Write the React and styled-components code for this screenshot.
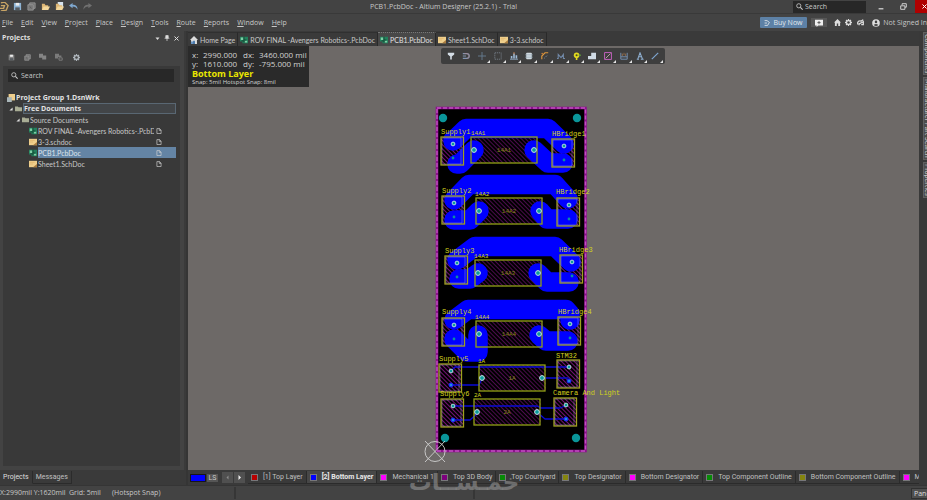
import React from "react";
import styled, { createGlobalStyle, css } from "styled-components";

const GlobalStyle = createGlobalStyle`
  *, *::before, *::after { box-sizing: border-box; }
  html, body { margin: 0; padding: 0; background: #3a3a3a; }
  body { overflow: hidden; }
  button, input { font: inherit; color: inherit; margin: 0; padding: 0; border: 0; background: none; }
  ul { list-style: none; margin: 0; padding: 0; }
  svg { display: block; flex: none; }
`;

const narrowText = css`
  font-family: Roboto, "Open Sans", sans-serif;
`;

const documentText = css`
  font-family: Lato, "Open Sans", sans-serif;
`;

const Window = styled.div`
  display: flex;
  flex-direction: column;
  height: 100vh;
  overflow: hidden;
  font-family: "Open Sans", "Noto Sans", sans-serif;
  font-size: 7px;
  line-height: 10px;
  color: #c8c8c8;
  background: #3a3a3a;
  white-space: nowrap;
`;

const TitleBar = styled.header`
  display: grid;
  grid-template-columns: 1fr auto 1fr;
  align-items: center;
  height: 14px;
  flex: none;
  background: #434343;
  border-bottom: 1px solid #393939;
`;

const QuickAccess = styled.div`
  display: flex;
  gap: 4px;
`;

const IconButton = styled.button`
  display: flex;
  align-items: center;
  justify-content: center;
  width: ${(p) => p.$w || 10}px;
  height: 10px;
`;

const DocTitle = styled.h1`
  margin: 0;
  padding-right: 40px;
  font-size: 7px;
  font-weight: 400;
`;

const WindowTools = styled.div`
  display: flex;
  justify-content: flex-end;
  align-items: center;
  height: 13px;
`;

const TitleSearch = styled.label`
  display: flex;
  align-items: center;
  gap: 2px;
  width: 73px;
  height: 12px;
  padding-left: 3px;
  margin-right: 8px;
  background: #272727;
  input { width: 50px; outline: none; }
  input::placeholder { color: #c8c8c8; opacity: 1; }
`;

const WindowButton = styled.button`
  display: flex;
  align-items: center;
  justify-content: ${(p) => (p.$close ? "flex-end" : "center")};
  width: ${(p) => (p.$close ? 12 : 14)}px;
  height: 13px;
  margin-left: ${(p) => (p.$gap || 0)}px;
  background: ${(p) => (p.$close ? "#b00000" : "transparent")};
`;

const MenuBar = styled.nav`
  display: flex;
  align-items: center;
  justify-content: space-between;
  height: 17px;
  flex: none;
  background: #434343;
`;

const MenuList = styled.div`
  display: flex;
  gap: 8px;
  padding-left: 2px;
`;

const MenuItem = styled.button`
  line-height: 10px;
  &::first-letter { text-decoration: underline; }
`;

const Account = styled.div`
  display: flex;
  align-items: center;
  width: 167px;
  gap: 1px;
`;

const BuyButton = styled.button`
  display: flex;
  align-items: center;
  justify-content: center;
  gap: 3px;
  width: 47px;
  height: 11px;
  flex: none;
  margin-right: 3px;
  border-radius: 1px;
  background: #5d81a6;
  color: #e4e8ec;
`;

const CommentButton = styled.button`
  display: flex;
  align-items: center;
  justify-content: center;
  width: 16px;
  height: 9px;
  flex: none;
  margin-right: 4px;
  background: #565656;
`;

const SignIn = styled.button`
  display: flex;
  align-items: center;
  gap: 3px;
  margin-left: 4px;
`;

const Workspace = styled.div`
  display: flex;
  flex: 1;
  min-height: 0;
`;

const SidePanel = styled.aside`
  display: flex;
  flex-direction: column;
  width: 188px;
  flex: none;
  border-right: 2px solid #353535;
  ${narrowText}
`;

const PanelFrame = styled.section`
  display: flex;
  flex-direction: column;
  flex: 1;
  min-height: 0;
  margin-right: 2px;
  padding: 0 4px 4px 3px;
  background: #434343;
`;

const PanelHeader = styled.div`
  display: flex;
  align-items: center;
  height: 14px;
  h2 {
    margin: 0 auto 0 -1px;
    font-family: "Open Sans", sans-serif;
    font-size: 7px;
    font-weight: 700;
    color: #dedede;
  }
`;

const PanelTools = styled.div`
  display: flex;
  align-items: center;
  gap: 6px;
  height: 18px;
  margin-top: 3px;
  padding: 0 3px;
`;

const PanelBody = styled.div`
  flex: 1;
  padding: 1px 4px 0 4px;
  background: #393939;
`;

const PanelSearch = styled.label`
  display: flex;
  align-items: center;
  gap: 3px;
  height: 13px;
  margin: 2px 2px 0 1px;
  padding-left: 3px;
  background: #282828;
  input { flex: 1; min-width: 0; outline: none; font-family: "Open Sans", sans-serif; }
  input::placeholder { color: #c8c8c8; opacity: 1; }
`;

const Tree = styled.ul`
  margin-top: 10px;
`;

const TreeRow = styled.li`
  display: flex;
  align-items: center;
  height: 11px;
  padding-left: ${(p) => p.$indent}px;
`;

const Caret = styled.span`
  width: 6px;
  svg { width: 4px; height: 4px; }
`;

const TreeLabel = styled.button`
  display: flex;
  align-items: center;
  flex: 1;
  min-width: 0;
  height: 11px;
  margin-left: 1px;
  padding: 0 14px 0 0;
  text-align: left;
  font-weight: ${(p) => (p.$bold ? 700 : 400)};
  color: ${(p) => (p.$bold ? "#e2e2e2" : "#c8c8c8")};
  ${(p) => (p.$bold ? css`font-family: "Open Sans", sans-serif;` : documentText)}
  ${(p) => p.$focus && css`border: 1px solid #596773; background: #424548;`}
  ${(p) => p.$selected && css`background: #6484a4; color: #dde5ec;`}
  span { flex: 1; overflow: hidden; }
  svg { margin-left: 2px; }
`;

const PanelTabs = styled.div`
  display: flex;
  align-items: center;
  height: 15px;
`;

const PanelTab = styled.button`
  height: 13px;
  padding: 0 3px;
  color: ${(p) => (p.$active ? "#dedede" : "#c0c0c0")};
  border-right: 1px solid #2b2b2b;
  border-bottom: 1px solid ${(p) => (p.$active ? "transparent" : "#2b2b2b")};
`;

const Editor = styled.main`
  display: flex;
  flex-direction: column;
  flex: 1;
  min-width: 0;
`;

const DocTabs = styled.div`
  display: flex;
  height: 15px;
  flex: none;
  padding-top: 1px;
  ${documentText}
`;

const DocTab = styled.button`
  display: flex;
  align-items: center;
  gap: 2px;
  padding: 0 2px;
  border-right: 1px solid #292929;
  border-top: 1px ${(p) => (p.$active ? "dotted #777" : "solid #303030")};
  background: ${(p) => (p.$active ? "#484848" : "#3a3a3a")};
  color: ${(p) => (p.$active ? "#e2e2e2" : "#c8c8c8")};
`;

const Canvas = styled.div`
  position: relative;
  flex: 1;
  min-height: 0;
  background: #6d6967;
`;

const HeadsUp = styled.div`
  position: absolute;
  top: 0;
  left: 0;
  width: 121px;
  height: 41px;
  padding: 4px 2px 0 4px;
  background: #2a2a2a;
  color: #d2d2d2;
  font-size: 8px;
  line-height: 9px;
`;

const Coordinates = styled.div`
  display: grid;
  grid-template-columns: 11px 40px 16px 1fr;
`;

const LayerName = styled.div`
  font-size: 9px;
  line-height: 11px;
  font-weight: 700;
  color: #eae600;
`;

const SnapInfo = styled.div`
  font-size: 6px;
  line-height: 6px;
`;

const ActiveBar = styled.div`
  position: absolute;
  top: 2px;
  left: 253px;
  display: flex;
  align-items: center;
  height: 16px;
  padding: 0 2px;
  border-radius: 2px;
  background: #3e3e3e;
`;

const ToolButton = styled.button`
  position: relative;
  display: flex;
  align-items: center;
  justify-content: center;
  width: ${(p) => (p.$wide ? 15 : 16)}px;
  height: 16px;
  &::after {
    content: "";
    display: ${(p) => (p.$menu ? "block" : "none")};
    position: absolute;
    right: 0;
    bottom: 1px;
    border-left: 3px solid transparent;
    border-bottom: 3px solid #e4e4e4;
  }
`;

const Board = styled.svg`
  margin: 52px 0 0 236px;
  width: 200px;
  height: 368px;
  text {
    font-family: "Liberation Mono", monospace;
    font-size: 7px;
    fill: #d2d21e;
  }
  .fuse { font-size: 6px; }
`;

const LayerBar = styled.div`
  display: flex;
  align-items: center;
  height: 15px;
  flex: none;
  padding-left: 2px;
  overflow: hidden;
  ${narrowText}
`;

const CurrentLayer = styled.button`
  width: 16px;
  height: 8px;
  flex: none;
  border: 1px solid #181818;
  background: #0000ff;
`;

const LayerSet = styled.button`
  width: 11px;
  height: 8px;
  flex: none;
  margin: 0 4px 0 1px;
  background: #565656;
  line-height: 8px;
`;

const Pager = styled.button`
  display: flex;
  align-items: center;
  justify-content: center;
  width: 11px;
  height: 11px;
  flex: none;
  margin-right: 1px;
  background: #505050;
`;

const LayerTabs = styled.div`
  display: flex;
  flex: 1;
  min-width: 0;
  margin-left: 2px;
  overflow: hidden;
`;

const LayerTab = styled.button`
  display: flex;
  align-items: center;
  flex: none;
  gap: 5px;
  height: 13px;
  padding: 0 3px;
  border-right: 1px solid #2b2b2b;
  border-bottom: 1px solid #2b2b2b;
  background: ${(p) => (p.$active ? "#474747" : "#3a3a3a")};
  color: ${(p) => (p.$active ? "#e8e8e8" : "#c0c0c0")};
  font-weight: ${(p) => (p.$active ? 700 : 400)};
`;

const Swatch = styled.span`
  width: 7px;
  height: 7px;
  flex: none;
  border: 1px solid #77777a;
  background: ${(p) => p.$color};
`;

const Dock = styled.div`
  display: flex;
  flex-direction: column;
  gap: 2px;
  width: 8px;
  flex: none;
  padding: 1px 0 0 4px;
  background: #393939;
  overflow: hidden;
  ${documentText}
`;

const DockTab = styled.button`
  flex: none;
  width: 10px;
  padding: 1px 0;
  border: 1px solid #606060;
  background: #4c4c4c;
  line-height: 8px;
  writing-mode: vertical-rl;
  text-align: left;
`;

const StatusBar = styled.footer`
  display: flex;
  align-items: center;
  height: 15px;
  flex: none;
  background: #434343;
  border-top: 1px solid #353535;
`;

const StatusText = styled.span`
  width: ${(p) => p.$w}px;
`;

const StatusDivider = styled.span`
  width: ${(p) => p.$w}px;
  height: 12px;
  border-left: 2px solid #363636;
`;

const PanelsButton = styled.button`
  width: 28px;
  height: 11px;
  margin: 0 -12px 0 auto;
  padding-left: 2px;
  text-align: left;
  border: 1px solid #303030;
  background: #4f4f4f;
  color: #dedede;
`;

const Watermark = styled.div`
  position: absolute;
  left: 404px;
  top: 466px;
  width: 120px;
  text-align: center;
  font-family: "DejaVu Sans", sans-serif;
  font-size: 23px;
  font-weight: 700;
  line-height: 32px;
  white-space: nowrap;
  color: rgba(165, 165, 165, 0.5);
  pointer-events: none;
`;

const Icon = ({ s = 9, children }) => (
  <svg width={s} height={s} viewBox="0 0 10 10" fill="none" aria-hidden="true">{children}</svg>
);

const SearchIcon = () => (
  <Icon s={7}><circle cx="4" cy="4" r="3" stroke="#ccc" strokeWidth="1.2" /><path d="M6.2 6.2L9.5 9.5" stroke="#ccc" strokeWidth="1.5" /></Icon>
);
const SaveIcon = ({ c = "#8fb4d4", s }) => (
  <Icon s={s}><path d="M1 1H9V9H1Z" fill={c} /><path d="M3 1H7V4H3Z" fill="#ececec" /><path d="M2.5 6H7.5V9H2.5Z" fill="#565b60" /></Icon>
);
const CopyIcon = ({ s }) => (
  <Icon s={s}><path d="M3 1H9V7H3Z" fill="#6c6c6c" stroke="#999" /><path d="M1 3H7V9H1Z" fill="#777" stroke="#939393" /><path d="M3 5L5 7" stroke="#555" /></Icon>
);
const OpenIcon = ({ doc }) => (
  <Icon>{doc && <path d="M3 0H9V6H3Z" fill="#d8e4ee" />}<path d="M1 2H4L5 3.5H8V9H1Z" fill="#ddb675" /><path d="M1 9L3 5H10L8 9Z" fill="#f3d79c" /></Icon>
);
const ArrowIcon = ({ redo }) => (
  <Icon><g transform={redo ? "translate(10 0) scale(-1 1)" : undefined}><path d="M0 4L4 1V3C8 3 9.5 5 9.5 8.5C8 6 7 5 4 5V7Z" fill={redo ? "#707070" : "#7fa8d0"} /></g></Icon>
);
const FolderIcon = () => (
  <Icon s={7}><path d="M0 2H4L5 3.3H10V9H0Z" fill="#a9ad95" /></Icon>
);
const BoardIcon = ({ s = 8 }) => (
  <Icon s={s}><path d="M0 1H10V9H3V7H0Z" fill="#22805c" /><path d="M1 2H4V5H1ZM6 6H9V8H6Z" fill="#7fcfa6" /><path d="M5 1V5H8M2 6H5V8" stroke="#11402e" /></Icon>
);
const SheetIcon = ({ s = 8 }) => (
  <Icon s={s}><path d="M0 1H10V9H0Z" fill="#efcf8c" /><path d="M10 5V9H5Z" fill="#a97b3e" /><path d="M1 3H7M1 5H5" stroke="#dcae62" strokeWidth=".7" /></Icon>
);
const PageIcon = () => (
  <Icon s={6}><path d="M1.5 1H6L8.5 3.5V9.2H1.5Z M5.5 1V4H8.5" stroke="#d3d3d3" strokeWidth="1.1" /></Icon>
);
const HomeIcon = ({ s = 8, c = "#ddd", blue }) => (
  <Icon s={s}><path d="M5 0L10 5H8.7V10H6V6.5H4V10H1.3V5H0Z" fill={c} />{blue && <path d="M4 6H6V10H4ZM1.5 7H3.5V10H1.5Z" fill="#4b83bd" />}</Icon>
);
const GearIcon = ({ s = 7, c = "#ddd", hole = "#434343" }) => (
  <Icon s={s}><circle cx="5" cy="5" r="3.6" fill={c} /><path d="M5 0V10M0 5H10M1.5 1.5L8.5 8.5M8.5 1.5L1.5 8.5" stroke={c} strokeWidth="1.8" /><circle cx="5" cy="5" r="1.8" fill={hole} /></Icon>
);

const TOOLS = [
  ["Filter", false, <path d="M1 1H9V3L6 5.5V9.5H4V5.5L1 3Z" fill="#d4dde5" />],
  ["Snap", false, <><path d="M1 2H6A3 3 0 0 1 6 8H1" stroke="#7f95b2" strokeWidth="1.6" /><path d="M3 2H6A3 3 0 0 1 6 8" stroke="#bb8585" strokeWidth=".7" /><path d="M1 5H5" stroke="#93aac5" /></>],
  ["Move", true, <path d="M5 0V10M0 5H10" stroke="#65798d" strokeWidth="1.2" />],
  ["Select", true, <path d="M1 1H9V9H1Z" stroke="#7d8994" strokeDasharray="1.5 1" />],
  ["Align", true, <><path d="M0 9H10" stroke="#9dbad6" /><path d="M1 5H3V8H1ZM4 2H6V8H4ZM7 4H9V8H7Z" fill="#9dbad6" /><path d="M5 0V3" stroke="#d98a51" /></>],
  ["Component", true, <><rect x="1.5" y="1" width="7" height="8" rx="1" fill="#d4dde4" /><path d="M0 3H10M0 5H10M0 7H10" stroke="#889baa" strokeWidth=".6" /></>],
  ["Route", true, <><path d="M1 9V5L5 1H9" stroke="#e0983c" strokeWidth="1.4" /><path d="M4 8L8 4" stroke="#8296aa" strokeDasharray="1.5 1" /><circle cx="1.5" cy="2" r="1" fill="#c7803b" /></>],
  ["Tune", true, <path d="M0 8H1.5V3L5 7L8 3V8H10" stroke="#7189a8" strokeWidth="1.3" />],
  ["Via", true, <><circle cx="4.5" cy="4" r="3.5" fill="#e2da20" /><circle cx="4.5" cy="4" r="1.3" fill="#4c4c20" /><path d="M4.5 7V10" stroke="#e2da20" strokeWidth="2" /><path d="M7 4H10" stroke="#5c9d36" strokeWidth="1.5" /></>],
  ["Polygon", true, <path d="M0 5H4V1H10V9H0Z" fill="#d0dbe5" />],
  ["Keepout", true, <><path d="M.7 .7H9.3V9.3H.7Z" stroke="#c260bd" strokeWidth="1.2" /><path d="M2 8L8 2" stroke="#d8b0c0" /></>],
  ["Dimension", true, <><path d="M1 1V9H9V1M1 6H9" stroke="#7790b1" strokeWidth="1.2" /><path d="M3 5V2M5 4V1M7 5V2" stroke="#b47e50" strokeWidth=".8" /></>],
  ["Text", true, <path d="M1 9H3.8M6 9H9.5M2.2 9L5 1L8.2 9M3.4 6H7" stroke="#8eafd0" strokeWidth="1.3" />],
  ["Line", true, <path d="M1 9L9 1" stroke="#7fa7d2" strokeWidth="1.4" />],
];

const MENUS = ["File", "Edit", "View", "Project", "Place", "Design", "Tools", "Route", "Reports", "Window", "Help"];

const LAYERS = [
  ["[1] Top Layer", "#b80000"], ["[2] Bottom Layer", "#0000ff"], ["Mechanical 1", "#ff00ff"],
  ["Top 3D Body", "#7d007d"], ["Top Courtyard", "#078a07"], ["Top Designator", "#85850f"],
  ["Bottom Designator", "#ff00ff"], ["Top Component Outline", "#078a07"],
  ["Bottom Component Outline", "#85850f"], ["Mechanical 13", "#ff00ff"],
];

const FILES = [
  ["ROV FINAL -Avengers Robotics-.PcbDoc", "pcb"], ["3-3.schdoc", "sch"],
  ["PCB1.PcbDoc", "pcb"], ["Sheet1.SchDoc", "sch"],
];

const CONNECTORS = [
  ["Supply1", 441, 137, 441, 134], ["HBridge1", 552, 139, 552, 136],
  ["Supply2", 442, 196, 442, 193], ["HBridge2", 557, 198, 556, 194],
  ["Supply3", 445, 256, 445, 253], ["HBridge3", 560, 255, 559, 252],
  ["Supply4", 442, 318, 442, 314], ["HBridge4", 558, 317, 558, 314],
  ["Supply5", 439, 364, 439, 361], ["STM32", 557, 360, 556, 358],
  ["Supply6", 441, 399, 440, 396], ["Camera And Light", 554, 398, 553, 395],
];

const FUSES = [
  ["14A1", 471, 137, 471], ["14A2", 476, 198, 475], ["14A3", 475, 260, 474],
  ["14A4", 476, 321, 475], ["1A", 479, 365, 478], ["2A", 474, 399, 474],
];

const POURS = [
  "M453 140V141L466 128.5H548L564 144", "M474 150L460 164H457", "M534 150L548 163H563",
  "M454 200L469 184.5H555L568 199", "M479 211L470 220H454", "M540 211L547 219H568",
  "M457 260L475 246.5H555L571 262", "M478 273L470 279H459", "M538 273L547 282H569",
  "M454 320L468 309.5H566L570 314V320", "M454 339L467 352H478V335", "M539 335L546 341H568",
];

const TRACKS = [
  "M451 371L455 367H568", "M451 385H479L482 379", "M543 378H568",
  "M452 406H537L541 408H560L565 406", "M452 420H470L478 413", "M538 413L545 419H565",
];

function BoardDrawing() {
  return (
    <Board viewBox="424 98 200 368" role="img" aria-label="PCB layout, bottom layer">
      <defs>
        <pattern id="hatch" width="3" height="3" patternUnits="userSpaceOnUse" patternTransform="rotate(-45)">
          <path d="M0 0V3" stroke="#8b168b" strokeWidth="1.7" />
        </pattern>
      </defs>
      <rect x="437" y="108" width="148.5" height="343" fill="#000" stroke="#8c128c" strokeWidth="2.6" />
      <rect x="437" y="108" width="148.5" height="343" fill="none" stroke="#c04fc0" strokeWidth="1.4" strokeDasharray="4 2" />
      {FUSES.map(([n, x, y]) => <rect key={n} x={x} y={y} width="67" height="26" fill="url(#hatch)" opacity=".65" />)}
      {CONNECTORS.map(([n, x, y]) => <rect key={n} x={x} y={y} width="23" height="28" fill="url(#hatch)" />)}
      <g fill="none" stroke="#0000ff" strokeLinejoin="round" strokeLinecap="round">
        <g strokeWidth="19.5">{POURS.map((d) => <path key={d} d={d} />)}</g>
        <path d="M458 345L470 354H478V345Z" fill="#0000ff" />
        <g stroke="#0a0ad8" strokeWidth="1.3">{TRACKS.map((d) => <path key={d} d={d} />)}</g>
      </g>
      {CONNECTORS.map(([n, x, y, lx, ly], i) => (
        <g key={n}>
          <rect x={x} y={y} width="22.5" height="28" fill="none" stroke="#a0a01e" strokeWidth="1.3" />
          <path d={`M${x + 1} ${y + 1}H${x + 20}V${y + 27}H${x + 1}Z`} fill="none" stroke="#b6b6c8" strokeWidth=".6" opacity=".65" />
          <circle cx={x + 12} cy={y + 7} r="1.9" fill="#0a9b9b" stroke="#c9e1e4" strokeWidth=".9" />
          <circle cx={x + 12} cy={y + 21} r={i > 7 ? 2 : 1.4} fill={i > 7 ? "#208be0" : "#0a8fa0"} stroke={i > 7 ? "#1818ff" : "none"} />
          <text x={lx} y={ly}>{n}</text>
        </g>
      ))}
      {FUSES.map(([n, x, y, lx]) => (
        <g key={n}>
          <rect x={x} y={y} width="66" height="26" fill="none" stroke="#91a014" strokeWidth="1.3" />
          <circle cx={x + 3} cy={y + 13} r="2.4" fill="#0a9b9b" stroke="#c9e1e4" />
          <circle cx={x + 63} cy={y + 13} r="2.4" fill="#0a9b9b" stroke="#c9e1e4" />
          <text className="fuse" x={lx} y={y - 2}>{n}</text>
          <text className="fuse" x={x + 33} y={y + 15} textAnchor="middle" opacity=".6">{n}</text>
        </g>
      ))}
      {[[443, 118], [577, 118], [445, 438], [576, 438]].map(([x, y]) => <circle key={x + "-" + y} cx={x} cy={y} r="4.2" fill="#0a9599" />)}
      <g fill="none" stroke="#d0d0d0" strokeWidth=".9">
        <circle cx="435" cy="451.5" r="10" />
        <path d="M425 441L445 462M445 441L425 462" />
      </g>
    </Board>
  );
}

export default function App() {
  return (
    <Window>
      <GlobalStyle />
      <TitleBar>
        <QuickAccess>
          <IconButton $w={8} aria-label="Altium"><Icon><path d="M1 1L5 0L9 4L7 9L1 10M1 4H5L4 7H0" stroke="#c9a566" strokeWidth="1.5" /></Icon></IconButton>
          <IconButton aria-label="Save"><SaveIcon /></IconButton>
          <IconButton aria-label="Save all"><CopyIcon /></IconButton>
          <IconButton aria-label="Open"><OpenIcon /></IconButton>
          <IconButton aria-label="Open project"><OpenIcon doc /></IconButton>
          <IconButton aria-label="Undo"><ArrowIcon /></IconButton>
          <IconButton aria-label="Redo"><ArrowIcon redo /></IconButton>
        </QuickAccess>
        <DocTitle>PCB1.PcbDoc - Altium Designer (25.2.1) - Trial</DocTitle>
        <WindowTools>
          <TitleSearch><SearchIcon /><input aria-label="Search commands" placeholder="Search" /></TitleSearch>
          <WindowButton aria-label="Minimize"><Icon s={6}><path d="M1 8H9" stroke="#ddd" strokeWidth="2" /></Icon></WindowButton>
          <WindowButton $gap={8} aria-label="Restore"><Icon s={7}><path d="M3 3V1H9V6H7M1 4H7V9H1Z" stroke="#ddd" strokeWidth="1.3" /></Icon></WindowButton>
          <WindowButton $close $gap={5} aria-label="Close"><Icon s={5}><path d="M1 1L9 9M9 1L1 9" stroke="#fff" strokeWidth="2" /></Icon></WindowButton>
        </WindowTools>
      </TitleBar>
      <MenuBar aria-label="Main menu">
        <MenuList>{MENUS.map((m) => <MenuItem key={m}>{m}</MenuItem>)}</MenuList>
        <Account>
          <BuyButton><Icon s={6}><path d="M1 1H5L9 4L6 9H1M1 5H5" stroke="#e4e8ec" strokeWidth="1.4" /></Icon>Buy Now</BuyButton>
          <CommentButton aria-label="Comments"><Icon s={8}><path d="M0 1H10V8H4L2 10V8H0Z" fill="#eee" /><path d="M5 2.5V6.5M3 4.5H7" stroke="#444" /></Icon></CommentButton>
          <IconButton $w={12} aria-label="Home"><HomeIcon s={7} /></IconButton>
          <IconButton aria-label="Settings"><GearIcon /></IconButton>
          <IconButton $w={14} aria-label="Notifications"><Icon s={7}><path d="M1 8V5Q2 2 6 3L9 1M3 9V7L9 4V8H6" stroke="#ddd" strokeWidth="1.8" /></Icon></IconButton>
          <SignIn><Icon s={8}><circle cx="5" cy="5" r="4.8" fill="#ddd" /><circle cx="5" cy="3.6" r="1.6" fill="#434343" /><path d="M2 7.5Q5 5 8 7.5Q5 10 2 7.5" fill="#434343" /></Icon>Not Signed In</SignIn>
        </Account>
      </MenuBar>
      <Workspace>
        <SidePanel>
          <PanelFrame>
            <PanelHeader>
              <h2>Projects</h2>
              <IconButton aria-label="Panel menu"><Icon s={5}><path d="M1 3H9L5 8Z" fill="#ddd" /></Icon></IconButton>
              <IconButton aria-label="Pin"><Icon s={6}><path d="M3 1H7V5H3ZM1 5.5H9M5 5V10" fill="#ddd" stroke="#ddd" strokeWidth="1.2" /></Icon></IconButton>
              <IconButton $w={8} aria-label="Close panel"><Icon s={5}><path d="M1 1L9 9M9 1L1 9" stroke="#ddd" strokeWidth="2" /></Icon></IconButton>
            </PanelHeader>
            <PanelTools>
              <IconButton aria-label="Save"><SaveIcon s={7} c="#858585" /></IconButton>
              <IconButton aria-label="Compile"><CopyIcon s={7} /></IconButton>
              <IconButton aria-label="Add project"><Icon s={8}><path d="M0 1H5V3H9V8H4V6H0Z" fill="#858585" /></Icon></IconButton>
              <IconButton aria-label="Remove project"><Icon s={8}><path d="M0 1H5V3H8V5H4V7H0Z" fill="#7b7b7b" /><path d="M5 6H9V9H5Z" stroke="#858585" /></Icon></IconButton>
              <IconButton $w={13} aria-label="Panel settings"><GearIcon s={7} c="#adb4ba" /></IconButton>
            </PanelTools>
            <PanelBody>
              <PanelSearch><SearchIcon /><input aria-label="Search projects" placeholder="Search" /></PanelSearch>
              <Tree>
                <TreeRow $indent={0}>
                  <Icon s={8}><path d="M2 0H10V8H2Z" fill="#efcf8c" /><path d="M0 4H6V10H0Z" fill="#a9b6b9" /></Icon>
                  <TreeLabel $bold><span>Project Group 1.DsnWrk</span></TreeLabel>
                </TreeRow>
                <TreeRow $indent={2}>
                  <Caret><Icon><path d="M9 1V9H1Z" fill="#ddd" /></Icon></Caret><FolderIcon />
                  <TreeLabel $bold $focus><span>Free Documents</span></TreeLabel>
                </TreeRow>
                <TreeRow $indent={9}>
                  <Caret><Icon><path d="M9 1V9H1Z" fill="#ddd" /></Icon></Caret><FolderIcon />
                  <TreeLabel><span>Source Documents</span></TreeLabel>
                </TreeRow>
                {FILES.map(([name, kind], i) => (
                  <TreeRow key={name} $indent={22}>
                    {kind === "pcb" ? <BoardIcon /> : <SheetIcon />}
                    <TreeLabel $selected={i === 2}><span>{name}</span><PageIcon /></TreeLabel>
                  </TreeRow>
                ))}
              </Tree>
            </PanelBody>
          </PanelFrame>
          <PanelTabs role="tablist">
            <PanelTab role="tab" aria-selected $active>Projects</PanelTab>
            <PanelTab role="tab">Messages</PanelTab>
          </PanelTabs>
        </SidePanel>
        <Editor>
          <DocTabs role="tablist">
            <DocTab role="tab"><HomeIcon blue />Home Page</DocTab>
            <DocTab role="tab"><BoardIcon />ROV FINAL -Avengers Robotics-.PcbDoc</DocTab>
            <DocTab role="tab" aria-selected $active><BoardIcon />PCB1.PcbDoc</DocTab>
            <DocTab role="tab"><SheetIcon />Sheet1.SchDoc</DocTab>
            <DocTab role="tab"><SheetIcon />3-3.schdoc</DocTab>
          </DocTabs>
          <Canvas>
            <HeadsUp>
              <Coordinates><span>x:</span><span>2990.000</span><span>dx:</span><span>3460.000 mil</span></Coordinates>
              <Coordinates><span>y:</span><span>1610.000</span><span>dy:</span><span>-795.000 mil</span></Coordinates>
              <LayerName>Bottom Layer</LayerName>
              <SnapInfo>Snap: 5mil Hotspot Snap: 8mil</SnapInfo>
            </HeadsUp>
            <BoardDrawing />
            <ActiveBar role="toolbar" aria-label="Active bar">
              {TOOLS.map(([name, menu, art], i) => (
                <ToolButton key={name} $menu={menu} $wide={i % 4 === 0} aria-label={name}><Icon s={8}>{art}</Icon></ToolButton>
              ))}
            </ActiveBar>
          </Canvas>
          <LayerBar>
            <CurrentLayer aria-label="Current layer" />
            <LayerSet>LS</LayerSet>
            <Pager aria-label="Previous layers"><Icon s={5}><path d="M7 1V9L3 5Z" fill="#8c8c8c" /></Icon></Pager>
            <Pager aria-label="Next layers"><Icon s={5}><path d="M3 0V10L8 5Z" fill="#eee" /></Icon></Pager>
            <LayerTabs>
              {LAYERS.map(([name, color], i) => (
                <LayerTab key={name} $active={i === 1}><Swatch $color={color} />{name}</LayerTab>
              ))}
            </LayerTabs>
          </LayerBar>
        </Editor>
        <Dock>
          <DockTab>Components</DockTab>
          <DockTab>Manufacturer Part Search</DockTab>
          <DockTab>Properties</DockTab>
        </Dock>
      </Workspace>
      <StatusBar>
        <StatusText $w={69}>X:2990mil Y:1620mil</StatusText>
        <StatusText $w={43}>Grid: 5mil</StatusText>
        <StatusText $w={122}>(Hotspot Snap)</StatusText>
        <StatusDivider $w={239} />
        <StatusDivider $w={10} />
        <PanelsButton>Panels</PanelsButton>
      </StatusBar>
      <Watermark lang="ar" dir="rtl">خمـســات</Watermark>
    </Window>
  );
}
